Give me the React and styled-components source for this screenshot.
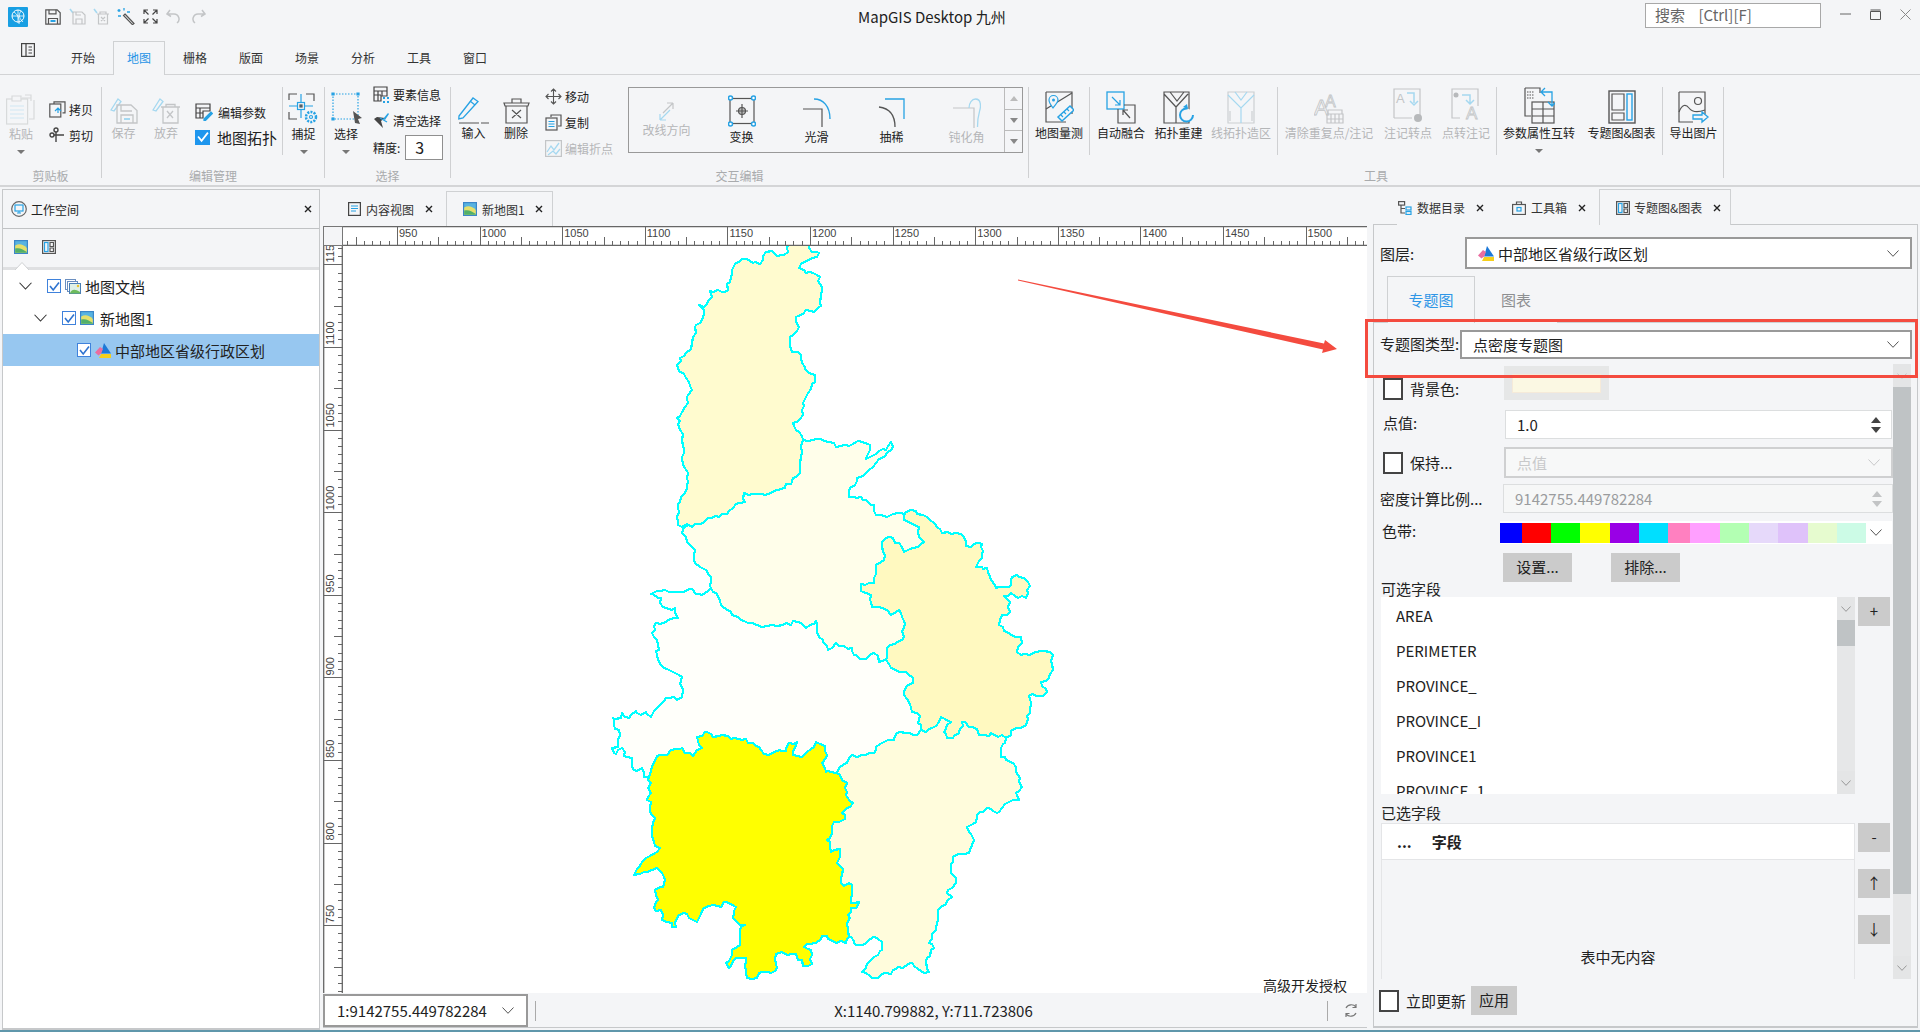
import React from "react";
import styled, { createGlobalStyle } from "styled-components";

const GlobalStyle = createGlobalStyle`
  html, body { margin: 0; padding: 0; background: #f4f5f7; }
  * { box-sizing: border-box; }
  body { font-family: "Noto Sans CJK SC", "Noto Sans", sans-serif; color: #222; font-size: 12px; }
`;

const D = "#555";
const B = "#27a2e4";
const G = "#c3c5c7";
const L = "#a5d8f0";

const Page = styled.div`
  position: relative; width: 1920px; height: 1032px; overflow: hidden; background: #f4f5f7;
  display: flex; flex-direction: column;
`;
const TitleBar = styled.div`display: flex; align-items: flex-start; height: 40px; flex: none;`;
const Quick = styled.div`display: flex; align-items: center; width: 858px; height: 33px; padding-left: 8px; svg { flex: none; }`;
const QuickGap = styled.span`width: ${p => p.$w}px; flex: none;`;
const Title = styled.div`font-size: 15px; line-height: 33px; color: #222; width: 787px; white-space: nowrap;`;
const Search = styled.div`
  width: 176px; height: 25px; margin-top: 3px; background: #fff; border: 1px solid #a8a8a8;
  color: #666; font-size: 15px; line-height: 22px; padding-left: 9px; white-space: pre;
`;
const WinBtns = styled.div`display: flex; margin-left: 9px; height: 28px; align-items: center;`;
const WinBtn = styled.div`width: 30px; display: flex; justify-content: center;`;

const MenuBar = styled.div`display: flex; height: 34px; flex: none; align-items: flex-end; padding-left: 21px;`;
const SideToggle = styled.div`width: 36px; height: 34px; padding-top: 3px;`;
const MenuTab = styled.div`
  width: 52px; height: 34px; margin-right: 4px; text-align: center; line-height: 31px; font-size: 12px;
  color: ${p => (p.$on ? "#1f93e6" : "#333")};
  border: 1px solid ${p => (p.$on ? "#cfd1d3" : "transparent")}; border-bottom: 0;
  background: ${p => (p.$on ? "#f4f5f7" : "transparent")}; margin-bottom: -1px; position: relative; z-index: 1;
`;

const Ribbon = styled.div`
  height: 113px; flex: none; display: flex; align-items: flex-start; padding-top: 12px;
  border-top: 1px solid #d2d3d5; border-bottom: 2px solid #d4d5d7;
`;
const Group = styled.div`
  width: ${p => p.$w}px; height: 91px; flex: none; display: flex; flex-direction: column;
  border-right: 1px solid #cfd0d2;
`;
const GroupBody = styled.div`display: flex; align-items: flex-start; height: 68px;`;
const GroupLabel = styled.div`
  margin-top: auto; margin-bottom: -6px; text-align: center; line-height: 16px; font-size: 12px; color: #a9abad;
`;
const Sub = styled.div`
  display: flex; height: 68px; flex: none; width: ${p => p.$w ? p.$w + "px" : "auto"};
  border-right: ${p => (p.$sep ? "1px solid #cfd0d2" : 0)};
`;
const Big = styled.div`
  width: ${p => p.$w}px; flex: none; display: flex; flex-direction: column; align-items: center;
  color: ${p => (p.$off ? "#b4b6b8" : "#222")}; font-size: 12px; white-space: nowrap;
`;
const BigIcon = styled.div`
  height: ${p => p.$h || 38}px; display: flex; align-items: flex-end; justify-content: center; width: 100%;
`;
const BigText = styled.div`line-height: 18px;`;
const Caret = styled.div`
  width: 0; height: 0; border: 4px solid transparent; border-top: 4px solid #777; border-bottom: 0; margin-top: 7px;
`;
const Col = styled.div`
  display: flex; flex-direction: column; width: ${p => p.$w}px; flex: none; padding-left: ${p => p.$pl || 0}px;
  padding-top: ${p => p.$pt || 0}px; gap: ${p => p.$gap || 0}px; margin-top: ${p => p.$mt || 0}px;
`;
const Small = styled.div`
  display: flex; align-items: center; height: 18px; gap: ${p => p.$gap ?? 4}px; font-size: 12px; white-space: nowrap;
  color: ${p => (p.$off ? "#b4b6b8" : "#222")}; margin-top: ${p => p.$mt || 0}px;
  svg { flex: none; }
`;
const BlueCheck = styled.div`
  width: 15px; height: 15px; background: #1e96ee; display: flex; align-items: center; justify-content: center; flex: none;
`;
const Topo = styled.span`font-size: 15px; margin-left: 7px;`;
const Precision = styled.input`
  width: 38px; height: 25px; border: 1px solid #8f8f8f; background: #fff; font: 16px "Noto Sans CJK SC", sans-serif;
  color: #222; padding: 0 0 0 9px; margin-left: 5px;
`;
const Gallery = styled.div`
  width: 395px; height: 66px; flex: none; border: 1px solid #999; display: flex; background: #f4f5f7;
`;
const GalItem = styled.div`
  width: 75px; flex: none; display: flex; flex-direction: column; align-items: center; font-size: 12px;
  color: ${p => (p.$off ? "#b4b6b8" : "#222")}; white-space: nowrap;
`;
const GalIcon = styled.div`
  height: ${p => p.$h}px; display: flex; align-items: flex-end; justify-content: center;
`;
const GalSide = styled.div`
  width: 18px; margin-left: auto; display: flex; flex-direction: column; border-left: 1px solid #bbb;
`;
const GalBtn = styled.div`
  flex: 1; display: flex; align-items: center; justify-content: center;
  & + & { border-top: 1px solid #bbb; }
`;

const Main = styled.div`display: flex; flex: 1; min-height: 0; padding: 0 2px 0 2px;`;
const LeftPanel = styled.div`
  width: 318px; flex: none; border: 1px solid #c6c8ca; border-bottom-width: 2px; background: #fff; margin-top: 2px; display: flex; flex-direction: column;
`;
const PanelHead = styled.div`
  height: 39px; flex: none; background: #f4f5f7; border-bottom: 1px solid #c0c2c4; display: flex; align-items: center;
  padding: 0 7px 0 8px; gap: 4px; font-size: 12px;
`;
const Closer = styled.span`margin-left: auto; display: flex;`;
const PanelTools = styled.div`
  height: 41px; flex: none; background: #f4f5f7; border-bottom: 3px solid #dfe0e2; display: flex; align-items: flex-start;
  padding: 11px 0 0 11px; gap: 14px; position: relative;
`;
const Notch = styled.svg`position: absolute; left: 12px; bottom: -3px;`;
const Tree = styled.div`display: flex; flex-direction: column; padding-top: 0;`;
const TreeRow = styled.div`
  height: 32px; display: flex; align-items: center; font-size: 15px; color: #222;
  padding-left: ${p => 16 + p.$lvl * 15}px; background: ${p => (p.$sel ? "#97c7f0" : "transparent")};
`;
const TreeArrow = styled.div`width: 28px; flex: none; display: flex;`;
const TreeCheck = styled.div`
  width: 14px; height: 14px; flex: none; background: #fff; border: 1.5px solid #3f82dc; display: flex; align-items: center; justify-content: center;
`;
const TreeIcon = styled.div`width: 17px; margin-left: 4px; margin-right: 3px; flex: none; display: flex;`;

const Center = styled.div`width: 1048px; flex: none; padding-left: 3px; margin-top: 2px; display: flex; flex-direction: column; margin-right: 5px;`;
const TabStrip = styled.div`
  height: 37px; flex: none; display: flex; align-items: flex-end;
`;
const DocTab = styled.div`
  height: 35px; width: ${p => p.$w}px; flex: none; display: flex; align-items: center; font-size: 12px; color: #333;
  padding-left: ${p => p.$pl}px; gap: 5px; border: 1px solid ${p => (p.$on ? "#cfd1d3" : "transparent")}; border-bottom: 0;
  background: #f4f5f7; svg { flex: none; }
`;
const TabX = styled.span`margin-left: ${p => p.$ml}px; display: flex;`;
const MapFrame = styled.div`
  width: 1044px; height: 767px; flex: none; display: grid; grid-template-columns: 20px 1fr; grid-template-rows: 20px 1fr;
  background: #fff;
`;
const Corner = styled.div`border: 1px solid #777; background: #f4f5f7;`;
const RulerTop = styled.svg`display: block; background: #fff; font-family: "Liberation Sans", sans-serif;`;
const RulerLeft = styled.svg`display: block; background: #fff; font-family: "Liberation Sans", sans-serif;`;
const Canvas = styled.div`position: relative; overflow: hidden; background: #fff;`;
const MapSvg = styled.svg`display: block;`;
const License = styled.div`position: absolute; right: 20px; bottom: 0; font-size: 14px; line-height: 16px; color: #222; white-space: nowrap;`;
const StatusBar = styled.div`height: 34px; flex: none; display: flex; align-items: center; font-size: 15px; color: #222; width: 1044px; border-bottom: 1px solid #c6c8ca; margin-top: 1px;`;
const ScaleCombo = styled.div`
  width: 205px; height: 33px; background: #fff; border: 2px solid #999; display: flex; align-items: center; justify-content: space-between;
  padding: 0 12px 0 12px; white-space: nowrap;
`;
const VBar = styled.div`width: 1px; height: 20px; background: #aaa; margin-left: ${p => p.$ml}px; flex: none;`;
const Coord = styled.div`width: 791px; text-align: center; white-space: nowrap; padding-left: 4px;`;
const Reload = styled.div`margin-left: 16px; display: flex;`;

const Right = styled.div`width: 545px; flex: none; display: flex; flex-direction: column; margin-top: 0; padding-bottom: 2px;`;
const SideTabs = styled.div`height: 38px; flex: none; display: flex; align-items: flex-end; padding-left: 24px; font-size: 12px; margin-bottom: -1px;`;
const SideTab = styled.div`
  width: ${p => p.$w}px; height: 36px; display: flex; align-items: center; gap: ${p => p.$gap || 5}px; padding-left: ${p => p.$pl}px; flex: none; color: #333;
  border: 1px solid ${p => (p.$on ? "#cfd1d3" : "transparent")}; border-bottom: 0; background: #f4f5f7; position: relative; z-index: 1;
`;
const Panel = styled.div`
  flex: 1; min-height: 0; border: 1px solid #c6c8ca; border-bottom-width: 2px; padding-top: 12px; display: flex; flex-direction: column; font-size: 15px;
`;
const FieldRow = styled.div`display: flex; align-items: ${p => p.$end ? "flex-end" : "center"}; height: ${p => p.$h}px; flex: none; margin-top: ${p => p.$mt || 0}px; padding-left: ${p => p.$pl ?? 6}px;`;
const FieldLabel = styled.div`width: ${p => p.$w}px; flex: none; white-space: nowrap; color: #222; font-size: 15px; padding-bottom: ${p => p.$pb || 0}px;`;
const Combo = styled.div`
  height: ${p => p.$h}px; width: ${p => p.$w}px; flex: none; background: ${p => (p.$off ? "#f7f8f8" : "#fff")};
  border: 2px solid ${p => (p.$off ? "#cfd0d1" : "#999")}; display: flex; align-items: center; padding: 0 11px;
  font-size: 15px; gap: 4px; color: ${p => (p.$off ? "#c8c9ca" : "#222")};
`;
const ComboEnd = styled.span`margin-left: auto; display: flex;`;
const Strip = styled.div`
  height: 47px; flex: none; margin-top: 7px; border-bottom: 1px solid #cfd1d3; padding-left: 13px; display: flex; font-size: 15px;
`;
const StripTab = styled.div`
  width: ${p => p.$w}px; height: 47px; text-align: center; line-height: 46px; flex: none;
  color: ${p => (p.$on ? "#2f96e6" : "#8d8f91")}; border: 1px solid ${p => (p.$on ? "#cfd1d3" : "transparent")}; border-bottom: 0;
  background: #f4f5f7; margin-bottom: -1px;
`;
const Scroller = styled.div`height: 615px; flex: none; margin-top: 5px; display: flex;`;
const Form = styled.div`width: 519px; flex: none; display: flex; flex-direction: column;`;
const VScroll = styled.div`width: 18px; flex: none; display: flex; flex-direction: column; background: #e6e7e8;`;
const ScrollCap = styled.div`height: 23px; flex: none; background: #e4e5e6; display: flex; align-items: center; justify-content: center;`;
const ScrollThumb = styled.div`height: ${p => p.$h}px; flex: none; background: #bfc3c5;`;
const ScrollEnd = styled.div`height: 23px; margin-top: auto; flex: none; background: #e4e5e6; display: flex; align-items: center; justify-content: center;`;
const Box = styled.div`width: 20px; height: 22px; flex: none; background: #fff; border: 2px solid #444; margin-right: 7px;`;
const Swatch = styled.div`width: 105px; height: 34px; background: #e6e7e7; padding: 8px; display: flex; margin-left: ${p => p.$ml}px; flex: none;`;
const SwatchFill = styled.div`flex: 1; height: 19px; background: #fbf8e3; border: 1px solid #f5ead9;`;
const Spin = styled.div`
  height: 29px; width: ${p => p.$w}px; flex: none; background: ${p => (p.$off ? "#f6f7f7" : "#fff")}; border: 1px solid #dcdedf; display: flex; align-items: center;
  padding: 0 10px 0 ${p => p.$pl}px; font-size: 15px; color: ${p => (p.$off ? "#9a9c9e" : "#222")};
`;
const SpinArrows = styled.div`margin-left: auto; display: flex; flex-direction: column; gap: 4px;`;
const Tri = styled.div`
  width: 0; height: 0; border-left: 5px solid transparent; border-right: 5px solid transparent;
  ${p => (p.$up ? `border-bottom: 6px solid ${p.$c};` : `border-top: 6px solid ${p.$c};`)}
`;
const Ramp = styled.div`
  width: 392px; height: 23px; flex: none; background: #fff; display: flex; align-items: center; margin-left: -4px;
`;
const RampColor = styled.div`width: ${p => p.$w}px; height: 20px; background: ${p => p.$c}; flex: none;`;
const RampEnd = styled.div`margin-left: 4px; display: flex;`;
const GreyBtn = styled.div`
  width: ${p => p.$w}px; height: 29px; flex: none; background: #cbcbcb; text-align: center; line-height: 28px; font-size: 15px; color: #222;
  margin-left: ${p => p.$ml || 0}px; margin-top: ${p => p.$mt || 0}px;
`;
const SectionLabel = styled.div`height: ${p => p.$h}px; flex: none; padding-left: 7px; font-size: 15px; line-height: 13px; padding-top: ${p => p.$pt || 0}px; white-space: nowrap;`;
const Lists = styled.div`display: flex; padding-left: 7px; height: ${p => p.$h}px; flex: none;`;
const FieldList = styled.div`width: 456px; flex: none; background: #fff; overflow: hidden; padding: 1px 0 0 15px; font-size: 15px;`;
const FieldItem = styled.div`height: 35px; line-height: 35px; white-space: nowrap;`;
const ListScroll = styled.div`width: 18px; flex: none; background: #e6e7e8; display: flex; flex-direction: column;`;
const SideBtns = styled.div`width: 32px; margin-left: 3px; flex: none; display: flex; flex-direction: column;`;
const Table = styled.div`
  width: 474px; flex: none; display: flex; flex-direction: column; border: 1px solid #e4e5e7; border-bottom: 0;
`;
const TableHead = styled.div`
  height: 36px; flex: none; background: #fff; border-bottom: 1px solid #e4e5e7; display: flex; align-items: center; padding-left: 15px; font-weight: 700; font-size: 15px;
`;
const HeadField = styled.span`margin-left: 20px;`;
const Empty = styled.div`flex: 1; display: flex; align-items: flex-end; justify-content: center; padding-bottom: 12px; font-size: 15px;`;
const Footer = styled.div`display: flex; align-items: center; height: 29px; flex: none; margin-top: 7px; padding-left: 5px; font-size: 15px;`;
const FootLabel = styled.div`width: 65px; flex: none; white-space: nowrap;`;
const RedBox = styled.div`position: absolute; left: 1365px; top: 319px; width: 553px; height: 59px; border: 3px solid #f44b3f; pointer-events: none;`;
const BottomStrip = styled.div`height: 2px; flex: none; background: #5f97ab;`;

const Ico = ({ w, h, children, ...r }) => (
  <svg width={w} height={h} viewBox={`0 0 ${w} ${h}`} fill="none" stroke={D} strokeWidth="1.2" {...r}>{children}</svg>
);

const Chev = ({ c = "#555", w = 12, h = 7 }) => (
  <svg width={w} height={h} viewBox="0 0 12 7" fill="none" stroke={c} strokeWidth="1"><path d="M.5.5 6 6.300 11.500.5" /></svg>
);
const X = () => (
  <svg width="8" height="8" viewBox="0 0 8 8" stroke="#222" strokeWidth="1.400"><path d="M1 1l6 6M7 1 1 7" /></svg>
);
const Check = ({ c = "#2f74d0", s = 11 }) => (
  <svg width={s} height={s} viewBox="0 0 11 11" fill="none" stroke={c} strokeWidth="1.600"><path d="M1 5l3.200 4L10 1.500" /></svg>
);

const MapThumb = ({ s = 14 }) => (
  <svg width={s} height={s} viewBox="0 0 14 14">
    <rect width="14" height="14" fill="#3b86c8" />
    <rect x="1.200" y="1.200" width="11.600" height="11.600" fill="#58b3e0" />
    <path d="M1.200 5.500C5 3.500 9 4 12.800 8v4.800H1.200z" fill="#e5df6a" />
    <path d="M1.200 8.500c4-1 7 0 11.600 3.500v.8H1.200z" fill="#52b06a" />
  </svg>
);
const MapStack = () => (
  <svg width="16" height="15" viewBox="0 0 16 15" fill="none">
    <rect x=".5" y=".5" width="10" height="10" stroke="#6b8fc0" />
    <rect x="2.500" y="2.500" width="10" height="10" stroke="#6b8fc0" fill="#fff" />
    <rect x="4.500" y="4.500" width="11" height="10" stroke="#4a7fb5" fill="#dff1e8" />
    <path d="M5 14c2-4 5-4 10-1v1.500H5z" fill="#6dbb5c" />
    <circle cx="13" cy="7" r="1.200" fill="#e8c12e" />
  </svg>
);
const LayerIco = () => (
  <svg width="16" height="15" viewBox="0 0 16 15">
    <path d="M9 0l7 10.500H6z" fill="#1d79d8" />
    <path d="M5 4 0 9.500l3.500 3L6 10.500 8 6z" fill="#ea6da0" />
    <path d="M4 15l2-4h10v4z" fill="#f6cf1b" />
  </svg>
);
const Monitor = () => (
  <svg width="16" height="16" viewBox="0 0 16 16" fill="none">
    <circle cx="8" cy="8" r="7.300" stroke="#666" strokeWidth="1.200" />
    <rect x="4" y="4" width="8" height="6" stroke={B} strokeWidth="1.200" />
    <path d="M6 12h4M8 10v2" stroke={B} />
  </svg>
);
const PanelIco = ({ c = D }) => (
  <Ico w={14} h={14} stroke={c}>
    <rect x=".6" y=".6" width="12.800" height="12.800" />
    <rect x="2.500" y="2.500" width="3.500" height="9" stroke={B} />
    <path d="M8 2.500h3.500v4H8zM8 8h3.500v3.500H8z" />
  </Ico>
);
const DocIco = () => (
  <Ico w={13} h={14} stroke="#444">
    <rect x=".6" y=".6" width="11.800" height="12.800" />
    <path d="M3 4h7M3 6.500h7M3 9h5" stroke={B} />
  </Ico>
);
const TreeIco = () => (
  <Ico w={14} h={14}>
    <rect x=".6" y=".6" width="6" height="3.500" /><path d="M3 4v8h4M3 7.500h4" />
    <rect x="8" y="6" width="5" height="3" stroke={B} /><rect x="8" y="10.500" width="5" height="3" stroke={B} />
  </Ico>
);
const BoxIco = () => (
  <Ico w={14} h={14}>
    <rect x=".6" y="3.500" width="12.800" height="10" /><path d="M4.500 3.500V1h5v2.500" />
    <rect x="5" y="6.500" width="4" height="3.500" stroke={B} />
  </Ico>
);

const Logo = () => (
  <svg width="20" height="20" viewBox="0 0 20 20" fill="none">
    <rect width="20" height="20" rx="1" fill="#189fe3" />
    <circle cx="10" cy="9" r="6" stroke="#fff" />
    <path d="M4 9h12M10 3v13M6 5c3 2 6 6 5 12M13 4c-2 3-3 6 2 11" stroke="#fff" strokeWidth=".8" />
  </svg>
);
const Floppy = ({ c = D, bar = B }) => (
  <Ico w={16} h={16} stroke={c}>
    <path d="M.8.800h11.400L15.200 3.800v11.400H.8z" />
    <path d="M4 .8v4h7v-4M3.500 15v-5.500h9V15" />
    <path d="M5.500 12h5" stroke={bar} strokeWidth="2" />
  </Ico>
);
const QTrash = () => (
  <Ico w={17} h={17} stroke={G}>
    <path d="M1 1 4 5" stroke={L} strokeWidth="1.500" />
    <path d="M4 6h12M7 6V4h6v2M5.500 6v10h9V6M8 9l4 4M12 9l-4 4" />
  </Ico>
);
const QSave = () => (
  <Ico w={17} h={17} stroke={G}>
    <path d="M1 1 4 5" stroke={L} strokeWidth="1.500" />
    <path d="M4 4h9l3 3v9H4zM7 4v3h5M7 16v-5h6v5" />
  </Ico>
);
const Wand = () => (
  <Ico w={18} h={17}>
    <path d="M8 6l9 9.500-1.500 1.200L6.500 7.500z" />
    <path d="M2 1v3M.5 2.500h3M7 0v2.500M10 4h3M1 8h3" stroke={B} strokeWidth="1.300" />
  </Ico>
);
const Fit = () => (
  <Ico w={15} h={15} stroke="#444">
    <path d="M1 5V1h4M10 1h4v4M14 10v4h-4M5 14H1v-4M1 1l4.500 4.500M14 1 9.500 5.500M14 14 9.500 9.500M1 14l4.500-4.500" />
  </Ico>
);
const Undo = ({ flip }) => (
  <Ico w={15} h={16} stroke={G} strokeWidth="1.500" transform={flip ? "scale(-1 1)" : undefined}>
    <path d="M4 1 1 5l4 2.500M1.500 5H8a5 5 0 0 1 3 9" />
  </Ico>
);
const Sidebar = () => (
  <Ico w={14} h={14} stroke="#444">
    <rect x=".6" y=".6" width="12.800" height="12.800" />
    <path d="M5 .6v12.800M7.500 4h3.500M7.500 7h3.500M7.500 10h3.500" />
  </Ico>
);
const Paste = () => (
  <Ico w={30} h={32} stroke="#d8dadb">
    <path d="M16 5h9v3M19 2h6v3M28 7v19h-5" />
    <rect x=".6" y="6" width="21" height="25" fill="#f4f5f7" />
    <path d="M6 3h9v5H6z" fill="#f4f5f7" />
    <path d="M4 13h14M4 17h14M4 21h14M4 25h14" stroke="#cfe8f4" />
  </Ico>
);
const Copy = () => (
  <Ico w={17} h={17}>
    <path d="M5 3V.8h11v11h-2.500" />
    <rect x=".8" y="3" width="11" height="13" fill="#f4f5f7" />
    <path d="M6 10l3-3 3 3M9 7v5" stroke={B} />
  </Ico>
);
const Cut = () => (
  <Ico w={16} h={16} stroke="#444" strokeWidth="1.400">
    <circle cx="3" cy="8" r="2" /><circle cx="7" cy="3" r="2" />
    <path d="M5 8h10M7 5v10" />
  </Ico>
);
const SaveOff = () => (
  <Ico w={28} h={28} stroke={G} strokeWidth="1.300">
    <path d="M1 14 8 3l3 2.500L4 15z" stroke={L} />
    <path d="M7 9h14l6 5.500V27H7z" />
    <path d="M11 9v6h11M11 27v-8h12v8" /><path d="M14 23h6" stroke={L} strokeWidth="2" />
  </Ico>
);
const DropOff = () => (
  <Ico w={29} h={28} stroke={G} strokeWidth="1.300">
    <path d="M1 14 8 3l3 2.500L4 15z" stroke={L} />
    <path d="M9 11h19M14 11V8.500h9V11M11 11v16h15V11M15 15l6 7M21 15l-6 7" />
  </Ico>
);
const ParamIco = () => (
  <Ico w={18} h={18} stroke="#444">
    <path d="M1 1h14v7H8v7H1zM1 5h14M5 5v10M1 10h7" />
    <path d="M9 16l7-7 1.500 1.500-7 7H9z" fill={B} stroke={B} />
  </Ico>
);
const SnapIco = () => (
  <Ico w={31} h={32} stroke={D}>
    <path d="M1 7V1h8M18 1h8v7M1 19v7h8" />
    <path d="M1 13h24M13 1v24" stroke={B} strokeWidth="1.200" />
    <rect x="9.500" y="9.500" width="7" height="7" fill="#f4f5f7" stroke={B} />
    <rect x="12" y="12" width="2" height="2" fill={B} />
    <circle cx="23" cy="24" r="5" stroke={B} strokeWidth="2.500" strokeDasharray="2 1.200" />
    <circle cx="23" cy="24" r="1.500" stroke={B} />
  </Ico>
);
const SelectIco = () => (
  <Ico w={31} h={33}>
    <rect x="2" y="2" width="25" height="25" stroke={B} strokeDasharray="1.500 1.500" />
    <path d="M1 1h2v2H1zM26 1h2v2h-2zM1 26h2v2H1z" fill={B} stroke={B} />
    <path d="M22 19l9 7-4 1 2 5-5-1z" fill="#555" stroke="none" />
  </Ico>
);
const InfoIco = () => (
  <Ico w={17} h={17} stroke="#444">
    <path d="M1 1h13v9H8v5H1zM1 5h13M1 9h7M5 5v10M9 5v5" />
    <path d="M10 11h2v2h-2zM14 11h2v2h-2zM10 15h2v2h-2zM14 15h2v2h-2z" fill={B} stroke="none" />
  </Ico>
);
const ClearIco = () => (
  <Ico w={17} h={17}>
    <path d="M1 7l9 9-2-7 4-3-8-1z" fill="#444" stroke="none" />
    <path d="M10 7l5-6 1 1-4 6z" fill={B} stroke="none" />
    <path d="M7 6 14 10" stroke={B} />
  </Ico>
);
const InputIco = () => (
  <Ico w={31} h={28}>
    <path d="M1 20 15 2l5 3.500L5 22 .8 23z" stroke={B} strokeWidth="1.300" />
    <path d="M12 5l5 4" stroke={B} />
    <path d="M1 27h20M23 27h8" />
  </Ico>
);
const TrashBig = () => (
  <Ico w={27} h={26}>
    <path d="M1 5h25l-1 3H2zM9 5V1h9v4M3 8v17h21V8M9 12l9 8M18 12l-9 8" />
  </Ico>
);
const MoveIco = () => (
  <Ico w={17} h={17} strokeWidth="1.100">
    <path d="M8.500 1v15M1 8.500h15M6 3.500 8.500 1 11 3.500M6 13.500 8.500 16l2.500-2.500M3.500 6 1 8.500 3.500 11M13.500 6 16 8.500 13.500 11" />
  </Ico>
);
const DupIco = () => (
  <Ico w={17} h={17}>
    <path d="M6 3V1h10v11h-3" />
    <rect x="1" y="4" width="11" height="12" fill="#f4f5f7" />
    <path d="M3.500 7.500h6M3.500 10h6M3.500 12.500h6" stroke={B} />
  </Ico>
);
const VertexIco = () => (
  <Ico w={17} h={17} stroke={G}>
    <rect x=".6" y=".6" width="15.800" height="15.800" />
    <path d="M2 12l4-6 3 4 5-7M3 15l5-4 3 3 4-5" stroke={L} strokeWidth="1.300" />
  </Ico>
);
const ReverseIco = () => (
  <Ico w={17} h={19} stroke={L}>
    <path d="M15 1H9M15 1v6M15 1 5 11" stroke={G} />
    <path d="M2 18h6M2 18v-6M2 18 12 8" />
  </Ico>
);
const TransformIco = () => (
  <Ico w={28} h={33} stroke={D}>
    <rect x="2" y="3.500" width="24" height="25" />
    <circle cx="14" cy="16" r="3.500" fill="#bbb" />
    <path d="M14 9v14M8 16h12" />
    <g fill="#fff" stroke={B} strokeWidth="1.500">
      <circle cx="2.500" cy="3" r="2" /><circle cx="25.500" cy="3" r="2" />
      <circle cx="2.500" cy="29" r="2" /><circle cx="25.500" cy="29" r="2" />
    </g>
  </Ico>
);
const SmoothIco = () => (
  <Ico w={29} h={30}>
    <path d="M1 11h19v18" />
    <path d="M12 1c9 0 16 7 16 20" stroke={B} strokeWidth="1.400" />
  </Ico>
);
const ThinIco = () => (
  <Ico w={27} h={30}>
    <path d="M7 1h19v20" stroke={B} strokeWidth="1.300" />
    <path d="M1 9c8 1 16 6 16 20" strokeWidth="1.300" />
  </Ico>
);
const BluntIco = () => (
  <Ico w={29} h={31} stroke={G}>
    <path d="M1 11h21v20" />
    <path d="M17 11c0-5 3-9 6.500-9s5 3 5 7c0 5-3 7-3 21" stroke={L} strokeWidth="1.300" />
  </Ico>
);
const MiniTri = ({ up, c = "#999" }) => (
  <svg width="8" height="5" viewBox="0 0 8 5"><path d={up ? "M4 0l4 5H0z" : "M0 0h8L4 5z"} fill={c} /></svg>
);
const MeasureIco = () => (
  <Ico w={30} h={33}>
    <path d="M2 1h26v22M2 1v30h20" />
    <path d="M2 18 28 2" />
    <path d="M9 17c-3-4-4-6-4-8a4.500 4.500 0 0 1 9 0c0 2-2 4-5 8z" stroke={B} fill="#f4f5f7" />
    <circle cx="9.500" cy="9" r="1.500" fill={B} stroke="none" />
    <path d="M14 26l12-11 4 4-12 11z" stroke={B} strokeWidth="1.500" fill="#f4f5f7" />
    <path d="M17 24l2 2M20 21l2 2M23 18l2 2" stroke={B} />
  </Ico>
);
const MergeIco = () => (
  <Ico w={30} h={33}>
    <rect x="1" y="1" width="17" height="17" stroke={B} strokeWidth="1.300" />
    <path d="M18 14h11v18H12V18" />
    <path d="M6 6l8 8M14 9v5H9" stroke={B} /><path d="M24 27l-7-8M17 24v-5h5" />
  </Ico>
);
const RebuildIco = () => (
  <Ico w={32} h={33}>
    <path d="M1 1h25v31H1zM1 3l12 13 12-13M13 16v16M7 1l7 9 7-9" />
    <circle cx="23.500" cy="24" r="6.500" stroke={B} strokeWidth="2" strokeDasharray="31 10" fill="#f4f5f7" />
    <path d="M24 13l-4 3 5 2z" fill={B} stroke="none" />
  </Ico>
);
const LineTopoIco = () => (
  <Ico w={28} h={33} stroke="#ccd0d2">
    <path d="M1 1h26v31H1z" />
    <path d="M1 4l13 13 13-13M14 17v15M8 1l6 8 6-8" stroke={L} />
    <path d="M3 30V20M25 30V20" />
  </Ico>
);
const Glyph = styled.text`font-family: "Liberation Sans", sans-serif;`;
const ClearDupIco = () => (
  <Ico w={30} h={33} stroke={G}>
    <Glyph x="0" y="24" fontSize="22" fill="none" stroke={G} strokeWidth=".8">A</Glyph>
    <Glyph x="11" y="16" fontSize="16" fill="none" stroke={G} strokeWidth=".8">A</Glyph>
    <path d="M14 19h14v4H14zM13 23h16v9H13zM17 23v9M21 23v9M25 23v9M13 28h16" />
  </Ico>
);
const AnnoPt = () => (
  <Ico w={30} h={36} stroke={G}>
    <path d="M1 30V1h26v26M1 30h18" />
    <Glyph x="3" y="15" fontSize="13" fill={G} stroke="none">A</Glyph>
    <path d="M14 5h7v10M17 13l4 4 4-4" stroke={L} strokeWidth="1.500" />
    <circle cx="25" cy="30" r="4" fill="#b7b9bb" stroke="none" />
  </Ico>
);
const PtAnno = () => (
  <Ico w={30} h={36} stroke={G}>
    <path d="M9 30H1V1h26v17" />
    <circle cx="5" cy="7" r="2.500" fill="#b7b9bb" stroke="none" />
    <path d="M11 7h8v8M15 12l4 4 4-4" stroke={L} strokeWidth="1.500" />
    <Glyph x="15" y="31" fontSize="17" fill="none" stroke={G} strokeWidth=".8">A</Glyph>
  </Ico>
);
const ParamAttr = () => (
  <Ico w={31} h={37}>
    <path d="M1 1h15v5M1 1v28h6" />
    <path d="M3 5h7M3 8h7M3 11h7" strokeDasharray="1.500 1" />
    <rect x="8" y="15" width="22" height="21" fill="#f4f5f7" />
    <path d="M8 22h22M8 29h22M19 15v21" />
    <path d="M17 5h11v13M24 15l4 4 4-4M21 1l-4 4 4 4" stroke={B} strokeWidth="1.300" />
  </Ico>
);
const ThemeIco = () => (
  <Ico w={28} h={34}>
    <rect x="1" y="1" width="26" height="32" strokeWidth="1.400" />
    <path d="M4 4h12v16H4zM4 23h12v7H4z" />
    <rect x="19" y="4" width="5" height="26" stroke={B} strokeWidth="1.400" />
  </Ico>
);
const ExportIco = () => (
  <Ico w={32} h={33}>
    <path d="M1 1h26v22M1 1v30h14" />
    <circle cx="20" cy="10" r="3.500" />
    <path d="M1 21c3-8 7-8 10-4s8 5 16 2" />
    <path d="M15 24h9v-3l6 5-6 5v-3h-9z" stroke={B} strokeWidth="1.300" fill="#f4f5f7" />
  </Ico>
);
const ReloadIco = () => (
  <Ico w={14} h={15} stroke="#777">
    <path d="M12 4A6 6 0 0 0 2 5M2 11a6 6 0 0 0 10-1M12 1v3.500H8.500M2 14v-3.500h3.500" />
  </Ico>
);

/* map */
const Y = 1140;
const top = [[600,5],[598,35],[585,45],[565,47],[548,33],[530,35],[512,72],[492,70],[475,58],[458,58],[438,72],[428,100],[422,125],[418,150],[408,155],[362,153],[370,170],[350,195],[330,195],[345,210],[338,240],[322,255],[320,280],[310,310],[305,328],[285,348],[272,355],[270,392],[285,402],[300,425],[308,450],[293,470],[296,490],[280,515],[265,535],[272,570],[280,600],[278,650],[285,680],[296,700],[295,735],[275,770],[268,805],[268,855],[310,860]];
const abSouth = [[310,860],[345,845],[380,828],[415,823],[440,793],[467,787],[465,760],[545,760],[575,748],[590,732],[610,725],[632,700],[636,650],[642,600]];
const abEast = [[642,600],[620,570],[612,550],[632,538],[643,525],[642,490],[658,460],[677,425],[677,405],[660,400],[640,370],[637,345],[608,335],[603,290],[630,260],[622,232],[650,210],[675,215],[697,197],[698,140],[685,105],[650,100],[630,85],[645,65],[668,55],[690,40],[668,35],[660,5]];
const north = [...top, ...abSouth.slice(1), ...abEast.slice(1)];
const cWest = [[945,825],[945,840],[975,855],[990,860],[990,890],[1005,905],[975,925],[945,935],[930,910],[900,892],[880,905],[885,960],[860,975],[856,1030],[815,1032],[815,1052],[845,1065],[850,1100],[880,1105],[905,1125],[930,1110],[940,1130],[945,1190],[925,1205],[895,1225],[890,1260]];
const hubeiNE = [[890,1260],[870,1265],[855,1240],[825,1258],[795,1245],[790,1225],[740,1210],[718,1230],[690,1190],[682,1143]];
const henanS = [[682,1143],[650,1165],[625,1145],[590,1150],[565,1158],[520,1160],[490,1150],[455,1140],[430,1125],[395,1095],[380,1060],[365,1045]];
const henanW = [[365,1045],[365,1010],[340,985],[315,960],[318,930],[295,905],[280,880],[285,862],[310,860]];
const henan = [[642,600],[680,598],[720,606],[742,622],[780,618],[800,605],[820,605],[842,615],[832,658],[850,648],[870,632],[890,630],[905,605],[912,620],[885,650],[860,670],[830,700],[805,715],[780,755],[780,772],[815,772],[855,795],[860,825],[885,828],[940,820],...cWest,...hubeiNE.slice(1),...henanS.slice(1),...henanW.slice(1),...abSouth.slice(1)];
const cSouthW = [[890,1260],[905,1285],[920,1290],[950,1295],[972,1315],[945,1355],[965,1405],[985,1420],[995,1470]];
const cSouthE = [[995,1470],[1010,1475],[1040,1458],[1055,1432],[1085,1445],[1065,1475],[1075,1495],[1110,1480],[1120,1445],[1150,1460],[1170,1485],[1240,1485],[1250,1495]];
const anhui = [[945,825],[965,810],[985,822],[1015,830],[1035,850],[1060,878],[1100,880],[1125,890],[1132,918],[1180,912],[1178,945],[1162,980],[1195,985],[1205,1020],[1220,1045],[1260,1042],[1268,1010],[1285,1005],[1318,1025],[1318,1060],[1310,1075],[1265,1060],[1245,1068],[1262,1085],[1262,1115],[1240,1125],[1230,1155],[1265,1185],[1295,1190],[1298,1210],[1283,1235],[1295,1245],[1355,1232],[1392,1245],[1392,1290],[1380,1315],[1355,1325],[1375,1355],[1362,1368],[1320,1368],[1322,1420],[1310,1455],[1280,1465],[1250,1495],...[...cSouthE].reverse().slice(1),...[...cSouthW].reverse().slice(1),...[...cWest].reverse().slice(1)];
const s = a => a.map(([x, y]) => [x, y + Y]);
const yNorth = s([[180,470],[190,440],[205,408],[235,405],[245,390],[280,385],[312,408],[338,385],[325,350],[355,335],[372,350],[400,345],[425,358],[470,358],[510,380],[540,405],[555,395],[590,392],[600,370],[625,365],[612,405],[640,412],[655,395],[680,365],[708,378],[715,405],[700,430],[710,455],[745,460]]);
const yEast = s([[745,460],[775,488],[770,525],[792,550],[760,580],[768,598],[735,605],[728,640],[715,660],[725,695],[752,688],[745,730],[762,748],[757,790],[790,795],[785,850],[810,845],[808,855],[785,865],[775,910],[780,950]]);
const yellow = [...yNorth,...yEast.slice(1),...s([[772,968],[740,970],[700,948],[680,970],[645,980],[665,990],[668,1032],[642,1038],[620,1002],[562,1002],[565,1045],[545,1060],[510,1060],[490,1078],[475,1075],[470,1015],[440,1015],[420,1045],[412,1030],[430,990],[452,975],[452,930],[468,915],[445,905],[432,895],[442,860],[405,845],[395,860],[370,855],[350,860],[325,905],[300,895],[285,878],[270,885],[260,920],[248,920],[250,908],[220,900],[215,870],[195,865],[207,840],[198,810],[222,800],[225,770],[205,745],[165,755],[135,765],[150,740],[172,715],[213,685],[195,665],[190,625],[198,595],[188,585],[185,545],[175,540],[185,520],[178,505],[185,490]])];
const jxN = s([[745,460],[750,445],[780,415],[820,405],[855,400],[860,380],[885,365],[915,360],[925,338],[960,338],[985,345]]);
const hubei = [[365,1045],[340,1065],[320,1062],[310,1048],[285,1055],[240,1057],[205,1052],[185,1062],[215,1075],[222,1100],[258,1105],[268,1135],[200,1148],[190,1180],[205,1200],[208,1260],[225,1285],[270,1305],[278,1340],[278,1370],[265,1380],[255,1372],[230,1375],[205,1405],[185,1430],[170,1415],[155,1425],[140,1412],[120,1435],[100,1418],[95,1435],[72,1435],[75,1455],[90,1470],[88,1520],[70,1525],[80,1542],[100,1525],[105,1548],[130,1555],[135,1590],[160,1585],[165,1610],...yNorth,...jxN.slice(1),[995,1470],...cSouthW.slice().reverse().slice(1),...hubeiNE.slice(1),...henanS.slice(1)];
const jiangxi = [...jxN,[995,1470],...cSouthE.slice(1),...s([[1235,385],[1235,410],[1280,440],[1298,500],[1280,520],[1290,540],[1260,545],[1225,580],[1195,565],[1165,585],[1160,605],[1135,620],[1155,660],[1140,700],[1092,712],[1085,750],[1100,790],[1075,820],[1088,830],[1048,870],[1040,930],[1020,968],[1035,985],[1015,1015],[1020,1055],[1000,1055],[970,1030],[920,1048],[905,1062],[890,1058],[850,1075],[820,1055],[845,1020],[880,990],[880,965],[858,950],[830,968],[795,970],[785,950]]),...[...yEast].reverse().slice(0, -1)];

const noise = (x, y) => {
  const k = Math.sin(Math.round(x / 6) * 12.9898 + Math.round(y / 6) * 78.233) * 43758.5453;
  return k - Math.floor(k) - 0.5;
};
const rough = pts => {
  const out = [];
  for (let i = 0; i < pts.length; i++) {
    const [ax, ay] = pts[i];
    const [bx, by] = pts[(i + 1) % pts.length];
    const n = Math.max(1, Math.round(Math.hypot(bx - ax, by - ay) / 13));
    for (let j = 0; j < n; j++) {
      const fx = ax + ((bx - ax) * j) / n;
      const fy = ay + ((by - ay) * j) / n;
      const jx = j === 0 ? 0 : noise(fx, fy) * 11;
      const jy = j === 0 ? 0 : noise(fy + 3, fx + 9) * 11;
      out.push(`${Math.round((fx + jx) / 3) * 3},${Math.round((fy + jy) / 3) * 3}`);
    }
  }
  return out.join(" ");
};
const shapes = [
  [north, "#fffbcf"], [henan, "#fffeea"], [hubei, "#fffffa"], [anhui, "#fff9c0"], [jiangxi, "#fffcdc"], [yellow, "#ffff00"],
].map(([p, c]) => ({ points: rough(p), c }));

const MapDrawing = () => (
  <MapSvg width="1024" height="747" viewBox="0 0 1024 747">
    <g transform="translate(246 -6) scale(0.33333)" strokeLinejoin="round" shapeRendering="crispEdges">
      {shapes.map(sh => (
        <polygon key={sh.c} points={sh.points} fill={sh.c} stroke="#00ffff" strokeWidth="6.500" />
      ))}
    </g>
    <polygon points="675,33.500 981,97.500 982,94 994,103 979,107 980,103.500 675,34.500" fill="#f44b3f" />
  </MapSvg>
);

const range = (a, b, st) => { const r = []; for (let v = a; v <= b; v += st) r.push(v); return r; };
const K = 82.6 / 50;
const TopRulerDraw = () => (
  <RulerTop width="1024" height="20" viewBox="0 0 1024 20">
    <path d="M0 .7H1024M0 19.300H1024" stroke="#666" strokeWidth="1.300" />
    {range(920, 1540, 5).map(v => {
      const x = Math.round(54 + (v - 950) * K) + 0.5;
      const h = v % 50 === 0 ? 19 : v % 25 === 0 ? 9 : 5;
      return <path key={v} d={`M${x} 20V${20 - h}`} stroke="#666" />;
    })}
    {range(950, 1500, 50).map(v => (
      <text key={v} x={54 + (v - 950) * K + 2} y="11" fontSize="11" fill="#444">{v}</text>
    ))}
  </RulerTop>
);
const LeftRulerDraw = () => (
  <RulerLeft width="20" height="747" viewBox="0 0 20 747">
    <path d="M.7 0V747M19.300 0V747" stroke="#666" strokeWidth="1.300" />
    {range(700, 1160, 5).map(v => {
      const y = Math.round(101 + (1100 - v) * K) + 0.5;
      const h = v % 50 === 0 ? 19 : v % 25 === 0 ? 9 : 5;
      return <path key={v} d={`M20 ${y}H${20 - h}`} stroke="#666" />;
    })}
    {range(750, 1150, 50).map(v => {
      const y = 101 + (1100 - v) * K - 2;
      return <text key={v} x="11" y={y} fontSize="11" fill="#444" transform={`rotate(-90 11 ${y})`}>{v}</text>;
    })}
  </RulerLeft>
);

const rampCols = [[22,"#0000ff"],[29,"#ff0000"],[29,"#00ff00"],[30,"#ffff00"],[29,"#9900e6"],[29,"#00dfff"],[22,"#ff80c0"],[30,"#ff9fff"],[29,"#b3ffb3"],[29,"#e6d9fa"],[30,"#dfc2fa"],[29,"#e6fbcf"],[29,"#ccfbe6"]];
const fields = ["AREA", "PERIMETER", "PROVINCE_", "PROVINCE_I", "PROVINCE1", "PROVINCE_1"];
const menus = ["开始", "地图", "栅格", "版面", "场景", "分析", "工具", "窗口"];

const Tool = ({ w, icon, label, off, h, caret }) => (
  <Big $w={w} $off={off}>
    <BigIcon $h={h}>{icon}</BigIcon>
    <BigText>{label}</BigText>
    {caret && <Caret />}
  </Big>
);

export default function App() {
  return (
    <Page>
      <GlobalStyle />
      <TitleBar>
        <Quick>
          <Logo />
          <QuickGap $w={17} />
          <Floppy />
          <QuickGap $w={8} />
          <QSave />
          <QuickGap $w={7} />
          <QTrash />
          <QuickGap $w={7} />
          <Wand />
          <QuickGap $w={8} />
          <Fit />
          <QuickGap $w={8} />
          <Undo />
          <QuickGap $w={10} />
          <Undo flip />
        </Quick>
        <Title>MapGIS Desktop 九州</Title>
        <Search>{"搜索    [Ctrl][F]"}</Search>
        <WinBtns>
          <WinBtn><svg width="11" height="2"><path d="M0 1h11" stroke="#666" /></svg></WinBtn>
          <WinBtn><svg width="11" height="11" fill="none" stroke="#555"><path d="M.5 2.500h10v8H.5zM.5 1h10" /></svg></WinBtn>
          <WinBtn><svg width="11" height="11" stroke="#888"><path d="M.5.500l10 10M10.500.500l-10 10" /></svg></WinBtn>
        </WinBtns>
      </TitleBar>

      <MenuBar>
        <SideToggle><Sidebar /></SideToggle>
        {menus.map(m => <MenuTab key={m} $on={m === "地图"}>{m}</MenuTab>)}
      </MenuBar>

      <Ribbon>
        <Group $w={102}>
          <GroupBody>
            <Tool w={42} icon={<Paste />} label="粘贴" off caret />
            <Col $w={60} $pl={7} $pt={13} $gap={8}>
              <Small $gap={3}><Copy />拷贝</Small>
              <Small $gap={4}><Cut />剪切</Small>
            </Col>
          </GroupBody>
          <GroupLabel>剪贴板</GroupLabel>
        </Group>
        <Group $w={223}>
          <GroupBody>
            <Tool w={43} h={37} icon={<SaveOff />} label="保存" off />
            <Tool w={42} h={37} icon={<DropOff />} label="放弃" off />
            <Col $w={95} $pl={8} $pt={16} $gap={7}>
              <Small $gap={5}><ParamIco />编辑参数</Small>
              <Small $gap={0}><BlueCheck><Check c="#fff" s={12} /></BlueCheck><Topo>地图拓扑</Topo></Small>
            </Col>
            <Sub $sep />
            <Tool w={41} icon={<SnapIco />} label="捕捉" caret />
          </GroupBody>
          <GroupLabel>编辑管理</GroupLabel>
        </Group>
        <Group $w={126}>
          <GroupBody>
            <Tool w={42} icon={<SelectIco />} label="选择" caret />
            <Col $w={84} $pl={6} $mt={-2} $gap={8}>
              <Small $gap={3}><InfoIco />要素信息</Small>
              <Small $gap={3}><ClearIco />清空选择</Small>
              <Small $gap={0} $mt={1}>精度:<Precision readOnly value="3" /></Small>
            </Col>
          </GroupBody>
          <GroupLabel>选择</GroupLabel>
        </Group>
        <Group $w={578}>
          <GroupBody>
            <Tool w={45} h={37} icon={<InputIco />} label="输入" />
            <Tool w={40} h={37} icon={<TrashBig />} label="删除" />
            <Col $w={92} $pl={9} $gap={8}>
              <Small $gap={3}><MoveIco />移动</Small>
              <Small $gap={3}><DupIco />复制</Small>
              <Small $gap={3} $off><VertexIco />编辑折点</Small>
            </Col>
            <Gallery>
              <GalItem $off><GalIcon $h={33}><ReverseIco /></GalIcon>改线方向</GalItem>
              <GalItem><GalIcon $h={40}><TransformIco /></GalIcon>变换</GalItem>
              <GalItem><GalIcon $h={40}><SmoothIco /></GalIcon>光滑</GalItem>
              <GalItem><GalIcon $h={40}><ThinIco /></GalIcon>抽稀</GalItem>
              <GalItem $off><GalIcon $h={40}><BluntIco /></GalIcon>钝化角</GalItem>
              <GalSide>
                <GalBtn><MiniTri up c="#bbb" /></GalBtn>
                <GalBtn><MiniTri c="#888" /></GalBtn>
                <GalBtn><MiniTri c="#888" /></GalBtn>
              </GalSide>
            </Gallery>
          </GroupBody>
          <GroupLabel>交互编辑</GroupLabel>
        </Group>
        <Group $w={695}>
          <GroupBody>
            <Sub $sep $w={61}><Tool w={60} h={37} icon={<MeasureIco />} label="地图量测" /></Sub>
            <Sub $sep $w={188}>
              <Tool w={62} h={37} icon={<MergeIco />} label="自动融合" />
              <Tool w={53} h={37} icon={<RebuildIco />} label="拓扑重建" />
              <Tool w={72} h={37} icon={<LineTopoIco />} label="线拓扑造区" off />
            </Sub>
            <Sub $sep $w={219}>
              <Tool w={102} h={37} icon={<ClearDupIco />} label="清除重复点/注记" off />
              <Tool w={56} h={37} icon={<AnnoPt />} label="注记转点" off />
              <Tool w={60} h={37} icon={<PtAnno />} label="点转注记" off />
            </Sub>
            <Sub $sep $w={166}>
              <Tool w={84} h={37} icon={<ParamAttr />} label="参数属性互转" caret />
              <Tool w={81} h={37} icon={<ThemeIco />} label="专题图&图表" />
            </Sub>
            <Tool w={61} h={37} icon={<ExportIco />} label="导出图片" />
          </GroupBody>
          <GroupLabel>工具</GroupLabel>
        </Group>
      </Ribbon>

      <Main>
        <LeftPanel>
          <PanelHead><Monitor />工作空间<Closer><X /></Closer></PanelHead>
          <PanelTools>
            <MapThumb />
            <PanelIco />
            <Notch width="14" height="8" viewBox="0 0 14 8" fill="none">
              <path d="M0 8 7 .5 14 8" stroke="#cfd1d3" fill="#fff" />
            </Notch>
          </PanelTools>
          <Tree>
            <TreeRow $lvl={0}>
              <TreeArrow><Chev c="#333" w={13} h={8} /></TreeArrow>
              <TreeCheck><Check /></TreeCheck><TreeIcon><MapStack /></TreeIcon>地图文档
            </TreeRow>
            <TreeRow $lvl={1}>
              <TreeArrow><Chev c="#333" w={13} h={8} /></TreeArrow>
              <TreeCheck><Check /></TreeCheck><TreeIcon><MapThumb /></TreeIcon>新地图1
            </TreeRow>
            <TreeRow $lvl={2} $sel>
              <TreeArrow />
              <TreeCheck><Check /></TreeCheck><TreeIcon><LayerIco /></TreeIcon>中部地区省级行政区划
            </TreeRow>
          </Tree>
        </LeftPanel>

        <Center>
          <TabStrip>
            <DocTab $w={123} $pl={24}><DocIco />内容视图<TabX $ml={6}><X /></TabX></DocTab>
            <DocTab $w={107} $pl={16} $on><MapThumb />新地图1<TabX $ml={5}><X /></TabX></DocTab>
          </TabStrip>
          <MapFrame>
            <Corner />
            <TopRulerDraw />
            <LeftRulerDraw />
            <Canvas>
              <MapDrawing />
              <License>高级开发授权</License>
            </Canvas>
          </MapFrame>
          <StatusBar>
            <ScaleCombo>1:9142755.449782284<Chev /></ScaleCombo>
            <VBar $ml={7} />
            <Coord>X:1140.799882, Y:711.723806</Coord>
            <VBar $ml={0} />
            <Reload><ReloadIco /></Reload>
          </StatusBar>
        </Center>

        <Right>
          <SideTabs>
            <SideTab $w={108} $pl={0}><TreeIco />数据目录<TabX $ml={6}><X /></TabX></SideTab>
            <SideTab $w={94} $pl={6}><BoxIco />工具箱<TabX $ml={6}><X /></TabX></SideTab>
            <SideTab $w={132} $pl={16} $gap={4} $on><PanelIco />专题图&图表<TabX $ml={7}><X /></TabX></SideTab>
          </SideTabs>
          <Panel>
            <FieldRow $h={32}>
              <FieldLabel $w={85}>图层:</FieldLabel>
              <Combo $h={32} $w={447}><LayerIco />中部地区省级行政区划<ComboEnd><Chev /></ComboEnd></Combo>
            </FieldRow>
            <Strip>
              <StripTab $w={88} $on>专题图</StripTab>
              <StripTab $w={82}>图表</StripTab>
            </Strip>
            <FieldRow $h={29} $mt={7}>
              <FieldLabel $w={80} $pb={2}>专题图类型:</FieldLabel>
              <Combo $h={29} $w={452}>点密度专题图<ComboEnd><Chev /></ComboEnd></Combo>
            </FieldRow>
            <Scroller>
              <Form>
                <FieldRow $h={34} $mt={2} $pl={9} $end>
                  <Box />
                  <FieldLabel $w={50} $pb={1}>背景色:</FieldLabel>
                  <Swatch $ml={44}><SwatchFill /></Swatch>
                </FieldRow>
                <FieldRow $h={29} $mt={10} $pl={9}>
                  <FieldLabel $w={122} $pb={4}>点值:</FieldLabel>
                  <Spin $w={387} $pl={11}>1.0<SpinArrows><Tri $up $c="#444" /><Tri $c="#444" /></SpinArrows></Spin>
                </FieldRow>
                <FieldRow $h={31} $mt={8} $pl={9}>
                  <Box />
                  <FieldLabel $w={94}>保持...</FieldLabel>
                  <Combo $off $h={31} $w={389}>点值<ComboEnd><Chev c="#c8c9ca" /></ComboEnd></Combo>
                </FieldRow>
                <FieldRow $h={29} $mt={6} $pl={6}>
                  <FieldLabel $w={123}>密度计算比例...</FieldLabel>
                  <Spin $w={390} $pl={11} $off>9142755.449782284<SpinArrows><Tri $up $c="#c2c4c5" /><Tri $c="#c2c4c5" /></SpinArrows></Spin>
                </FieldRow>
                <FieldRow $h={23} $mt={8} $pl={8}>
                  <FieldLabel $w={122} $pb={4}>色带:</FieldLabel>
                  <Ramp>
                    {rampCols.map(([w, c]) => <RampColor key={c} $w={w} $c={c} />)}
                    <RampEnd><Chev /></RampEnd>
                  </Ramp>
                </FieldRow>
                <FieldRow $h={29} $mt={9} $pl={129}>
                  <GreyBtn $w={69}>设置...</GreyBtn>
                  <GreyBtn $w={69} $ml={39}>排除...</GreyBtn>
                </FieldRow>
                <SectionLabel $h={15}>可选字段</SectionLabel>
                <Lists $h={197}>
                  <FieldList>
                    {fields.map(f => <FieldItem key={f}>{f}</FieldItem>)}
                  </FieldList>
                  <ListScroll>
                    <ScrollCap><Chev c="#888" w={10} h={6} /></ScrollCap>
                    <ScrollThumb $h={26} />
                    <ScrollEnd><Chev c="#888" w={10} h={6} /></ScrollEnd>
                  </ListScroll>
                  <SideBtns><GreyBtn $w={32}>+</GreyBtn></SideBtns>
                </Lists>
                <SectionLabel $h={29} $pt={12}>已选字段</SectionLabel>
                <Lists $h={156}>
                  <Table>
                    <TableHead>...<HeadField>字段</HeadField></TableHead>
                    <Empty>表中无内容</Empty>
                  </Table>
                  <SideBtns>
                    <GreyBtn $w={32}>-</GreyBtn>
                    <GreyBtn $w={32} $mt={17}>↑</GreyBtn>
                    <GreyBtn $w={32} $mt={17}>↓</GreyBtn>
                  </SideBtns>
                </Lists>
              </Form>
              <VScroll>
                <ScrollCap><Chev c="#bbb" w={10} h={6} /></ScrollCap>
                <ScrollThumb $h={507} />
                <ScrollEnd><Chev c="#888" w={10} h={6} /></ScrollEnd>
              </VScroll>
            </Scroller>
            <Footer>
              <Box />
              <FootLabel>立即更新</FootLabel>
              <GreyBtn $w={46}>应用</GreyBtn>
            </Footer>
          </Panel>
        </Right>
      </Main>
      <BottomStrip />
      <RedBox />
    </Page>
  );
}
